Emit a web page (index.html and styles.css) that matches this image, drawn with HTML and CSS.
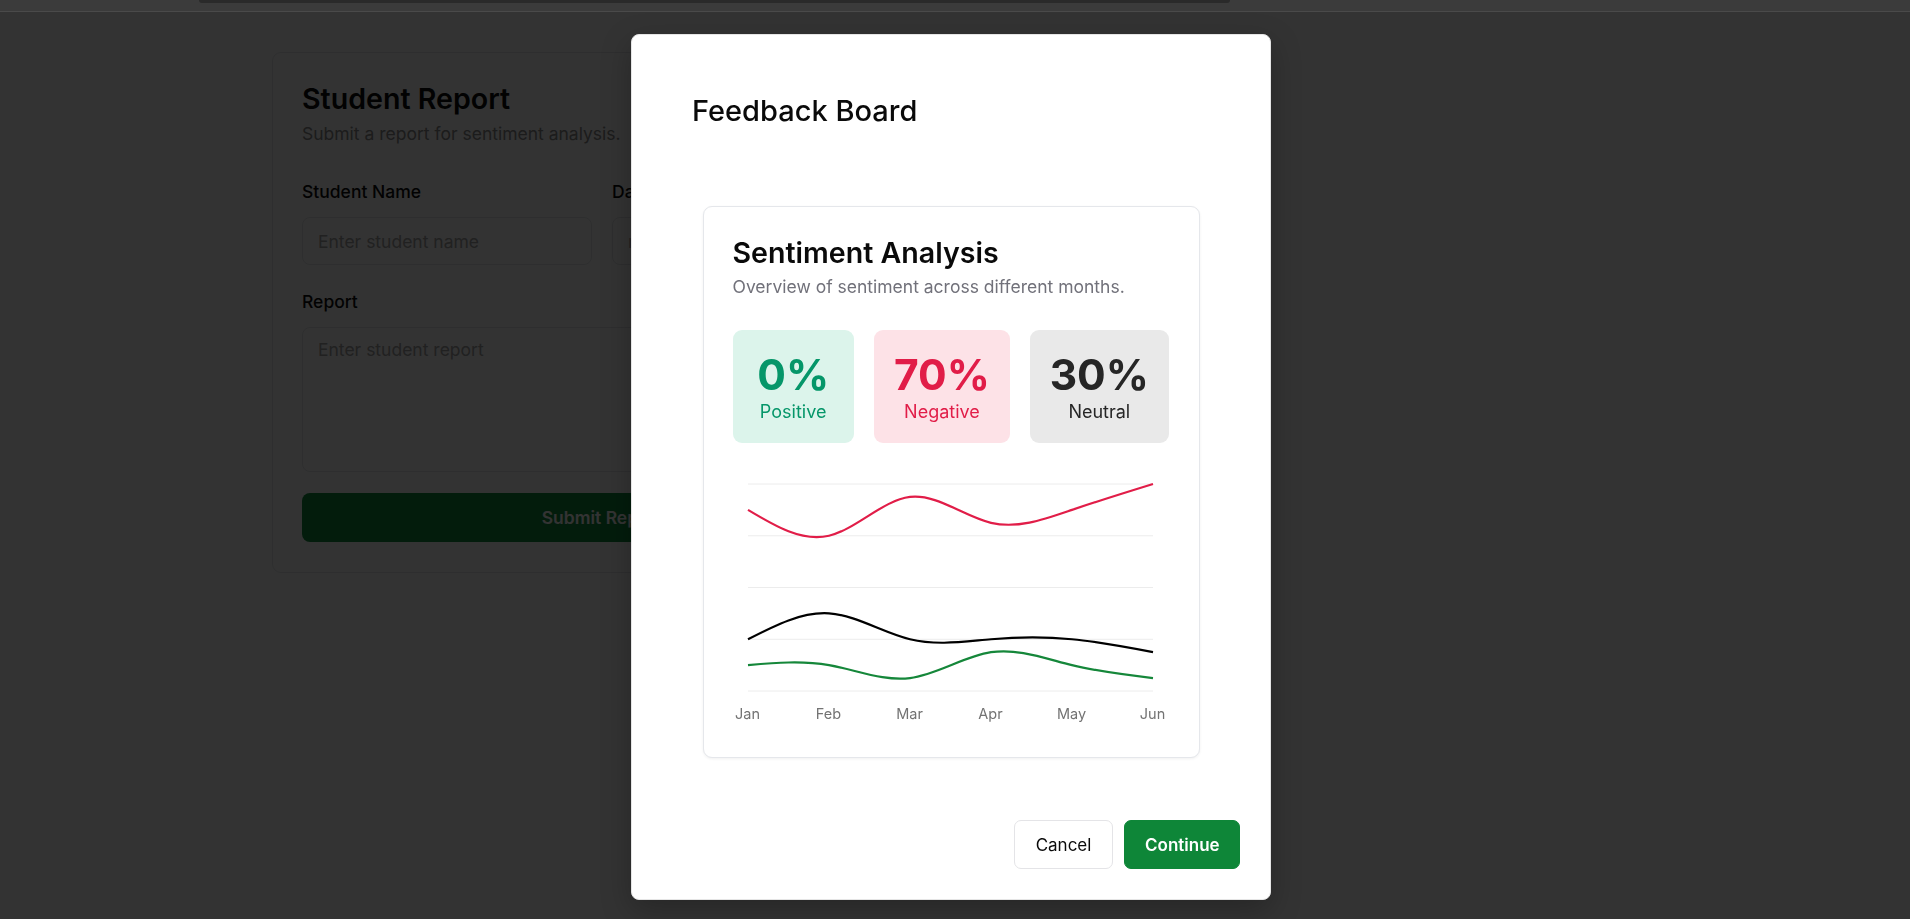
FILE: index.html
```html
<!DOCTYPE html>
<html lang="en">
<head>
<meta charset="utf-8">
<title>Feedback Board</title>
<link rel="stylesheet" href="styles.css">
</head>
<body>
<div class="topbar"><div class="topbar-tab"></div></div>

<main class="page">
  <section class="report-card">
    <h1 class="report-title">Student Report</h1>
    <p class="report-sub">Submit a report for sentiment analysis.</p>
    <div class="field-row">
      <div class="field">
        <label class="field-label">Student Name</label>
        <input class="field-input" type="text" placeholder="Enter student name">
      </div>
      <div class="field">
        <label class="field-label">Date</label>
        <input class="field-input" type="text" placeholder="mm/dd/yyyy">
      </div>
    </div>
    <div class="field field-report">
      <label class="field-label">Report</label>
      <textarea class="field-textarea" placeholder="Enter student report"></textarea>
    </div>
    <button class="submit-btn" type="button">Submit Report</button>
  </section>
</main>

<div class="overlay"></div>

<div class="modal" role="dialog">
  <div class="modal-header">
    <h2 class="modal-title">Feedback Board</h2>
  </div>
  <div class="modal-body">
    <div class="chart-card">
      <h3 class="chart-title">Sentiment Analysis</h3>
      <p class="chart-sub">Overview of sentiment across different months.</p>
      <div class="stats">
        <div class="stat stat-pos"><div class="stat-num">0%</div><div class="stat-label">Positive</div></div>
        <div class="stat stat-neg"><div class="stat-num">70%</div><div class="stat-label">Negative</div></div>
        <div class="stat stat-neu"><div class="stat-num">30%</div><div class="stat-label">Neutral</div></div>
      </div>
      <div class="chart">
        <div class="plot">
          <svg class="plot-svg" viewBox="0 0 500 80" preserveAspectRatio="none">
            <g class="grid">
              <line x1="0" y1="0" x2="500" y2="0"/>
              <line x1="0" y1="20" x2="500" y2="20"/>
              <line x1="0" y1="40" x2="500" y2="40"/>
              <line x1="0" y1="60" x2="500" y2="60"/>
              <line x1="0" y1="80" x2="500" y2="80"/>
            </g>
            <path class="line line-neg" d="M0 10 C33.33 16.252 66.67 22.504 100 20 C133.33 17.496 166.67 6.236 200 5 C233.33 3.764 266.67 12.552 300 15 C333.33 17.448 366.67 13.557 400 10 C433.33 6.443 466.67 3.221 500 0"/>
            <path class="line line-neu" d="M0 60 C33.33 54.649 66.67 49.298 100 50 C133.33 50.702 166.67 57.456 200 60 C233.33 62.544 266.67 60.877 300 60 C333.33 59.123 366.67 59.035 400 60 C433.33 60.965 466.67 62.982 500 65"/>
            <path class="line line-pos" d="M0 70 C33.33 69.099 66.67 68.198 100 70 C133.33 71.802 166.67 76.308 200 75 C233.33 73.692 266.67 66.571 300 65 C333.33 63.429 366.67 67.408 400 70 C433.33 72.592 466.67 73.796 500 75"/>
          </svg>
        </div>
        <div class="axis">
          <span class="tick"><span>Jan</span></span>
          <span class="tick"><span>Feb</span></span>
          <span class="tick"><span>Mar</span></span>
          <span class="tick"><span>Apr</span></span>
          <span class="tick"><span>May</span></span>
          <span class="tick"><span>Jun</span></span>
        </div>
      </div>
    </div>
  </div>
  <div class="modal-footer">
    <button class="btn btn-cancel" type="button">Cancel</button>
    <button class="btn btn-continue" type="button">Continue</button>
  </div>
</div>
</body>
</html>
```

FILE: styles.css
```css
* { box-sizing: border-box; }

body {
  margin: 0;
  background: #ffffff;
  font-family: Inter, "Noto Sans", sans-serif;
  color: #0a0a0a;
  overflow: hidden;
}

/* top strip */
.topbar {
  position: relative;
  z-index: 20;
  height: 12px;
  background: #3b3b3b;
  border-bottom: 1px solid #4a4a4a;
  padding-left: 199px;
}
.topbar-tab {
  width: 1031px;
  height: 3px;
  background: #2a2a2a;
  border-radius: 0 0 4px 4px;
}

/* underlying page */
.page {
  padding: 40px 0 0 272px;
}
.report-card {
  width: 660px;
  background: #fff;
  border: 1px solid #e5e7eb;
  border-radius: 9px;
  padding: 29px 29px 30px;
}
.report-title {
  margin: 0;
  font-size: 28.6px;
  line-height: 34px;
  font-weight: 600;
  color: #0a0a0a;
}
.report-sub {
  margin: 5px 0 0;
  font-size: 17.5px;
  line-height: 25px;
  color: #8a8a8a;
}
.field-row {
  display: grid;
  grid-template-columns: minmax(0, 1fr) minmax(0, 1fr);
  gap: 20px;
  margin-top: 33px;
}
.field { display: flex; flex-direction: column; min-width: 0; }
.field-label {
  font-size: 17.5px;
  line-height: 25px;
  font-weight: 500;
  color: #0a0a0a;
}
.field-input {
  width: 100%;
  margin-top: 13px;
  height: 48px;
  border: 1px solid #e5e7eb;
  border-radius: 8px;
  padding: 0 15px;
  font: 17.5px Inter, sans-serif;
  background: #fff;
}
.field-input::placeholder, .field-textarea::placeholder { color: #a3a3a3; }
.field-report { margin-top: 24px; }
.field-textarea {
  width: 100%;
  margin-top: 13px;
  height: 145px;
  border: 1px solid #e5e7eb;
  border-radius: 8px;
  padding: 9px 15px;
  font: 17.5px/25px Inter, sans-serif;
  resize: none;
  background: #fff;
}
.submit-btn {
  display: block;
  width: 100%;
  margin-top: 21px;
  height: 49px;
  border: 0;
  border-radius: 8px;
  background: #128a3c;
  color: #fff;
  font: 600 17.5px Inter, sans-serif;
}

/* overlay */
.overlay {
  position: fixed;
  inset: 0;
  background: rgba(0, 0, 0, 0.8);
  z-index: 10;
}

/* modal */
.modal {
  position: fixed;
  left: 631px;
  top: 34px;
  width: 640px;
  z-index: 30;
  background: #fff;
  border: 1px solid #e5e5e5;
  border-radius: 8px;
  box-shadow: 0 10px 30px rgba(0, 0, 0, 0.25);
}
.modal-header { padding: 58px 60px 0; }
.modal-title {
  margin: 0;
  font-weight: 500;
  font-size: 29px;
  line-height: 36px;
  letter-spacing: 0;
  color: #0a0a0a;
}
.modal-body {
  padding-top: 77px;
  display: flex;
  justify-content: center;
}
.chart-card {
  width: 497px;
  border: 1px solid #e5e7eb;
  border-radius: 9px;
  padding: 29px 30px 33px 29px;
  box-shadow: 0 1px 3px rgba(0, 0, 0, 0.06);
  background: #fff;
}
.chart-title {
  margin: 0;
  font-size: 28.6px;
  line-height: 34px;
  font-weight: 600;
  color: #0a0a0a;
}
.chart-sub {
  margin: 4px 0 0;
  font-size: 17.5px;
  line-height: 25px;
  color: #71717a;
}
.stats {
  margin-top: 31px;
  display: grid;
  grid-template-columns: 121fr 136fr 138fr;
  gap: 20px;
}
.stat {
  border-radius: 9px;
  padding: 23px 8px 18px;
  text-align: center;
}
.stat-num {
  font-size: 42.5px;
  line-height: 44px;
  font-weight: 700;
}
.stat-label {
  margin-top: 2px;
  font-size: 18px;
  line-height: 26px;
}
.stat-pos { background: #dcf4eb; color: #059669; }
.stat-neg { background: #fde2e7; color: #e11d48; }
.stat-neu { background: #e9e9e9; color: #262626; }

.chart { margin-top: 41px; }
.plot {
  padding: 0 16px 0 15px;
}
.plot-svg {
  display: block;
  width: 100%;
  height: 207px;
  overflow: visible;
}
.grid line {
  stroke: #ececec;
  stroke-width: 1;
  vector-effect: non-scaling-stroke;
}
.line {
  fill: none;
  stroke-width: 2.2;
  vector-effect: non-scaling-stroke;
}
.line-neg { stroke: #e11d48; }
.line-neu { stroke: #000000; }
.line-pos { stroke: #15873a; }

.axis {
  margin-top: 13px;
  padding: 0 16px 0 15px;
  display: flex;
  justify-content: space-between;
  font-size: 14.5px;
  line-height: 20px;
  color: #737373;
}
.tick {
  width: 0;
  display: flex;
  justify-content: center;
  white-space: nowrap;
}

.modal-footer {
  display: flex;
  justify-content: flex-end;
  gap: 11px;
  padding: 62px 30px 30px;
}
.btn {
  height: 49px;
  border-radius: 7px;
  font-family: Inter, sans-serif;
  font-size: 17px;
  padding: 0 20px;
  cursor: pointer;
}
.btn-cancel {
  background: #fff;
  border: 1px solid #e4e4e7;
  color: #0a0a0a;
  width: 99px;
}
.btn-continue {
  background: #0e8638;
  border: 1px solid #0e8638;
  color: #fff;
  font-weight: 600;
  width: 116px;
}
```
